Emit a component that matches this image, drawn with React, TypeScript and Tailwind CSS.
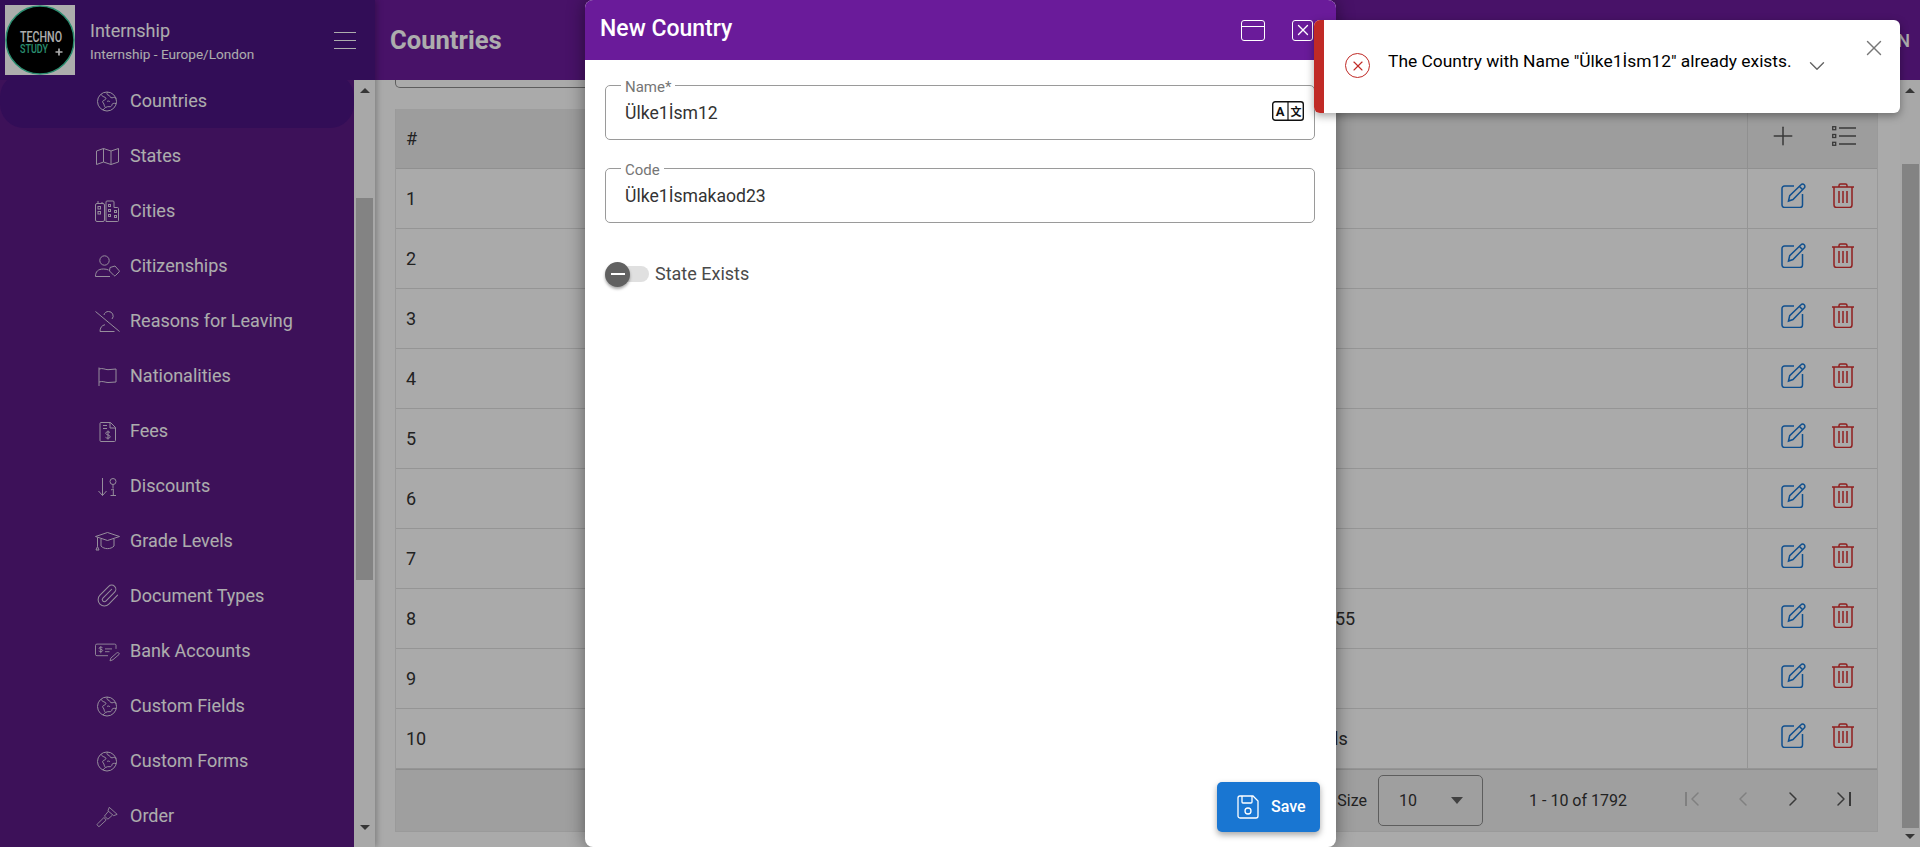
import { ChevronDown, ChevronLeft, ChevronRight, Plus, X, Paperclip } from "lucide-react";

const iconClass = "h-[25px] w-[25px] shrink-0 translate-y-px fill-none stroke-white stroke-1 opacity-80";

function Globe() {
    return (
        <svg viewBox="0 0 25 25" className={iconClass}>
            <circle cx="12" cy="12.500" r="9.500" />
            <path d="M6 5.300c1 2 2.500 2.400 4 3 1.600.7 1 2.200-.5 2.700-1.800.6-2.500 1.700-1.200 3 1.300 1.400.4 3 2.200 4.300" />
            <path d="M12.500 3.200c-1.300 1.500-.2 3 1.500 3.100 1 2 2.700 3.200 4.200 2.200 1-.6 2 .8 3.100.8" />
            <path d="M8 21c1.200-1.900 4-3.800 6-3.300 2 .4 3-1 3-2.100 0-1 1.700-1.700 4.300-1" />
            <path d="M12 12.500c1-.8 2.500-.5 3 .5" />
        </svg>
    );
}

function MapIcon() {
    return (
        <svg viewBox="0 0 25 25" className={iconClass}>
            <path d="M1.500 7 8.500 4.500l7.500 2.500 7.500-2.500V18L16 20.500 8.500 18l-7 2.500Z" />
            <path d="M8.500 4.500V18M16 7v13.500" />
        </svg>
    );
}

function CitiesIcon() {
    return (
        <svg viewBox="0 0 25 25" className={iconClass}>
            <g transform="translate(0 .5)">
                <rect x="0.500" y="4" width="9" height="18" rx="1.500" />
                <path d="M3 4V1.500M7 4V2.500" />
                <rect x="3" y="7" width="2.500" height="2.500" />
                <rect x="3" y="12" width="2.500" height="2.500" />
                <path d="M11 22V2.500a1 1 0 0 1 1-1h6a1 1 0 0 1 1 1V8h3.500a1 1 0 0 1 1 1v12a1 1 0 0 1-1 1Z" />
                <rect x="13.500" y="5" width="2" height="2" />
                <rect x="13.500" y="10" width="2" height="2" />
                <rect x="13.500" y="15" width="2" height="2" />
                <rect x="19.500" y="11" width="2" height="2" />
                <rect x="19.500" y="16" width="2" height="2" />
            </g>
        </svg>
    );
}

function CitizenIcon() {
    return (
        <svg viewBox="0 0 25 25" className={iconClass}>
            <circle cx="9.500" cy="6.500" r="4.700" />
            <path d="M0.500 22.500c0-5 2.500-7.500 8-7.500 2 0 3.500.3 5 1M0.500 22.500H15" />
            <path d="m15 13.500 5-1.500 4 4.500a1 1 0 0 1 0 1.500l-3.500 3.500a1 1 0 0 1-1.500 0l-4.500-4.500Z" />
        </svg>
    );
}

function LeavingIcon() {
    return (
        <svg viewBox="0 0 25 25" className={iconClass}>
            <path d="m0.500 2.500 24 20" />
            <path d="M9 6c.5-2.500 2.500-3.500 4.500-3.500a4.500 4.500 0 0 1 3.500 7.500" />
            <path d="M5 22.500c0-3.500 1.500-6 5-6.800M5 22.500h14.500" />
        </svg>
    );
}

function FlagIcon() {
    return (
        <svg viewBox="0 0 25 25" className={iconClass}>
            <path d="M4 3.500V22" />
            <path d="M4 5c4-1.300 6 .7 9 .7s5-.7 8-.7v13c-3 0-5 .5-8 .5s-5-1.800-9-.5" />
        </svg>
    );
}

function FeesIcon() {
    return (
        <svg viewBox="0 0 25 25" className={iconClass}>
            <path d="M6 3.500h9.500l5 5V21.500a1 1 0 0 1-1 1H6a1 1 0 0 1-1-1V4.500a1 1 0 0 1 1-1Z" />
            <path d="M15 3.500v5.500h5.500M8 6.500h4M8 9.500h4" />
            <path d="M15 13.500c-.8-1-4.200-1.200-4.300.8-.1 2 4.500 1.100 4.500 3.500 0 1.800-3.700 1.800-4.700.5M13 11.500v9" />
        </svg>
    );
}

function DiscountIcon() {
    return (
        <svg viewBox="0 0 25 25" className={iconClass}>
            <path d="M7.500 4v17.500M3.500 17l4 4.500 4-4.500" />
            <circle cx="18" cy="7.500" r="3" />
            <path d="M18 10.500v3.500M16 16l2.300-1.200v6.700M15.500 21.500h5.500" />
        </svg>
    );
}

function GradeIcon() {
    return (
        <svg viewBox="0 0 25 25" className={iconClass}>
            <path d="M12.500 3.500 24.500 7.500 12.500 11.500 0.500 7.500Z" />
            <path d="M6 10v7c3 3.500 10 3.500 13 0v-7" />
            <path d="M2.500 8.500v9M1 21l1.500-3.500L4 21Z" />
        </svg>
    );
}

function BankIcon() {
    return (
        <svg viewBox="0 0 25 25" className={iconClass}>
            <g transform="translate(0 3.500) scale(1 .8)">
                <path d="M21 8V3.500a1.500 1.500 0 0 0-1.500-1.500H2a1.500 1.500 0 0 0-1.500 1.500V15A1.500 1.500 0 0 0 2 16.500h11" />
                <path d="M7.500 6.500c-.8-.8-3.500-.8-3.500.7s3.700 1 3.700 2.800c0 1.600-3 1.600-4 .6M5.800 4.500v9M10 8h7M10 11.500h4.500" />
                <path d="m15 23 .8-3.500 6-6.500a1.500 1.500 0 0 1 2.200 2l-6 6.500Z" />
            </g>
        </svg>
    );
}

function GavelIcon() {
    return (
        <svg viewBox="0 0 25 25" className={iconClass}>
            <g transform="translate(1.500 2) scale(.88)">
                <path d="m14.500 1.500 9 8-4 1.500-6.500-5.500Z" />
                <path d="m13.500 6-4.500 5.500 4 3.500 5-4.500" />
                <path d="M8.500 13 1.500 20a1.500 1.500 0 0 0 0 2.500 1.500 1.500 0 0 0 2.500 0l7-6.500Z" />
            </g>
        </svg>
    );
}

function Clip() {
    return <Paperclip strokeWidth={1} className="h-[25px] w-[25px] shrink-0 text-white opacity-80" />;
}

const menu = [
    { label: "Countries", icon: <Globe /> },
    { label: "States", icon: <MapIcon /> },
    { label: "Cities", icon: <CitiesIcon /> },
    { label: "Citizenships", icon: <CitizenIcon /> },
    { label: "Reasons for Leaving", icon: <LeavingIcon /> },
    { label: "Nationalities", icon: <FlagIcon /> },
    { label: "Fees", icon: <FeesIcon /> },
    { label: "Discounts", icon: <DiscountIcon /> },
    { label: "Grade Levels", icon: <GradeIcon /> },
    { label: "Document Types", icon: <Clip /> },
    { label: "Bank Accounts", icon: <BankIcon /> },
    { label: "Custom Fields", icon: <Globe /> },
    { label: "Custom Forms", icon: <Globe /> },
    { label: "Order", icon: <GavelIcon /> },
];

const rows = [
    { n: 1, name: "", offset: "" },
    { n: 2, name: "", offset: "" },
    { n: 3, name: "", offset: "" },
    { n: 4, name: "", offset: "" },
    { n: 5, name: "", offset: "" },
    { n: 6, name: "", offset: "" },
    { n: 7, name: "", offset: "" },
    { n: 8, name: "55", offset: "pl-[34px]" },
    { n: 9, name: "", offset: "" },
    { n: 10, name: "ls", offset: "pl-[33px]" },
];

function Logo() {
    return (
        <svg viewBox="0 0 70 70" className="h-[70px] w-[70px] shrink-0 bg-white">
            <circle cx="35" cy="35" r="34" fill="#000" stroke="#3fd0a5" strokeWidth="1.500" />
            <text x="15" y="37" textLength="42" lengthAdjust="spacingAndGlyphs" fill="#fff" fontSize="15" fontWeight="500" fontFamily="Roboto, sans-serif">TECHNO</text>
            <text x="15" y="48" textLength="28" lengthAdjust="spacingAndGlyphs" fill="#3fd0a5" fontSize="13.500" fontWeight="500" fontFamily="Roboto, sans-serif">STUDY</text>
            <path d="M50.500 47h7M54 43.500v7" stroke="#fff" strokeWidth="1.700" />
        </svg>
    );
}

function ScrollBar({ width, thumbTop, thumbClass }: { width: string; thumbTop: string; thumbClass: string }) {
    return (
        <div className={`flex h-full shrink-0 flex-col items-center bg-[#f8f8f8] ${width}`}>
            <div className="mt-[8px] h-0 w-0 border-x-[5px] border-b-[5px] border-x-transparent border-b-[#505050]" />
            <div className={`w-[17px] flex-1 bg-[#c1c1c1] ${thumbTop} ${thumbClass}`} />
            <div className="mb-[8px] h-0 w-0 border-x-[5px] border-t-[5px] border-x-transparent border-t-[#505050]" />
        </div>
    );
}

function EditIcon() {
    return (
        <svg viewBox="0 0 25 25" className="h-[25px] w-[25px] fill-none stroke-[#1976d2] stroke-[1.500]">
            <path d="M13 3H3.500A2.500 2.500 0 0 0 1 5.500V22a2.500 2.500 0 0 0 2.500 2.500H19a2.500 2.500 0 0 0 2.500-2.500V11" />
            <path d="m7.500 18 1.200-5.300L20 1.800a2.200 2.200 0 0 1 3.200 0 2.200 2.200 0 0 1 0 3.200L12 16.500Z" />
            <path d="m18.500 3.500 3 3" />
        </svg>
    );
}

function TrashIcon() {
    return (
        <svg viewBox="0 0 22 25" className="h-[25px] w-[22px] fill-none stroke-[#d32f2f] stroke-[1.500]">
            <path d="M0 4h22M7 4V2.500A1.500 1.500 0 0 1 8.500 1h5A1.500 1.500 0 0 1 15 2.500V4" />
            <path d="M2 4v18a2.500 2.500 0 0 0 2.500 2.500h13A2.500 2.500 0 0 0 20 22V4" />
            <path d="M7 8v12M11 8v12M15 8v12" />
        </svg>
    );
}

function Field({ label, value, children }: { label: string; value: string; children?: React.ReactNode }) {
    return (
        <fieldset className="relative h-[62px] rounded-[5px] border border-[#9a9a9a] pl-[15px]">
            <legend className="h-[14px] px-[4px] text-[15px] leading-[18px] text-[#757575]">{label}</legend>
            <div className="flex h-[42px] items-center pl-[4px] text-[17.600px] text-[#333]">{value}</div>
            {children}
        </fieldset>
    );
}

export default function App() {
    return (
        <div className="relative flex h-[847px] w-[1920px] overflow-hidden bg-white font-['Roboto',sans-serif]">
            {/* sidebar */}
            <aside className="z-10 flex h-full w-[375px] shrink-0 flex-col shadow-[2px_0_6px_rgba(0,0,0,0.25)]">
                <div className="flex h-20 shrink-0 items-center bg-[#4a1480] pl-[5px] text-white">
                    <Logo />
                    <div className="ml-[15px] flex-1">
                        <div className="text-[18px] leading-6">Internship</div>
                        <div className="mt-[3px] text-[13.600px] leading-4">Internship - Europe/London</div>
                    </div>
                    <div className="mr-[19px] flex w-[22px] flex-col gap-[7px]">
                        <div className="h-px bg-white" />
                        <div className="h-px bg-white" />
                        <div className="h-px bg-white" />
                    </div>
                </div>
                <div className="flex min-h-0 flex-1">
                    <nav className="w-[354px] overflow-hidden bg-[#5a1a84]">
                        <div className="mt-[-7px]">
                            {menu.map((item, i) => (
                                <div
                                    key={item.label}
                                    className={`flex h-[55px] items-center pl-[95px] text-[18px] text-white ${i === 0 ? "rounded-[24px] bg-[#4a1480]" : ""}`}
                                >
                                    {item.icon}
                                    <span className="ml-[10px]">{item.label}</span>
                                </div>
                            ))}
                        </div>
                    </nav>
                    <ScrollBar width="w-[21px]" thumbTop="mt-[105px]" thumbClass="mb-[245px] max-h-[382px]" />
                </div>
            </aside>

            {/* page */}
            <div className="flex min-w-0 flex-1 flex-col">
                <header className="flex h-20 shrink-0 items-center bg-[#6a1b9a] pl-[15px] pr-[10px]">
                    <h1 className="text-[25.600px] font-bold text-white">Countries</h1>
                    <div className="ml-auto h-[30px] w-[30px] rounded-full bg-[#1976d2]" />
                    <div className="ml-[88px] h-[30px] w-[30px] rounded-full bg-[#424242]" />
                    <span className="ml-[120px] text-[18px] font-medium text-white">ADMIN</span>
                </header>
                <div className="flex min-h-0 flex-1">
                    <main className="min-w-0 flex-1 bg-[#fbfbfb] pl-5 pr-[22px]">
                        <div className="h-2 rounded-b-[5px] border border-t-0 border-[#8a8a8a]" />
                        <div className="mt-[21px] border-x border-b border-[#e3e3e3] text-[18px] text-[#333]">
                            <div className="flex h-[60px] items-center border-b border-[#d5d5d5] bg-[#e8e8e8]">
                                <div className="flex-1 pl-[10px]">#</div>
                                <div className="flex h-full w-[130px] items-center border-l border-[#d5d5d5] pb-[6px] pl-[10px]">
                                    <div className="flex w-[50px] justify-center">
                                        <Plus strokeWidth={1.2} className="h-[30px] w-[30px] text-[#555]" />
                                    </div>
                                    <div className="ml-[11px] flex w-[50px] justify-center">
                                        <svg viewBox="0 0 24 20" className="h-5 w-6 fill-none stroke-[#555] stroke-[1.300]">
                                            <rect x="0.700" y="0.700" width="3" height="3" />
                                            <rect x="0.700" y="8.500" width="3" height="3" />
                                            <rect x="0.700" y="16.300" width="3" height="3" />
                                            <path d="M7 2h17M7 10h17M7 18h17" />
                                        </svg>
                                    </div>
                                </div>
                            </div>
                            {rows.map((row) => (
                                <div key={row.n} className="flex h-[60px] items-center border-b border-[#dcdcdc]">
                                    <div className="w-[905px] shrink-0 pl-[10px]">{row.n}</div>
                                    <div className={`flex-1 ${row.offset}`}>{row.name}</div>
                                    <div className="flex h-full w-[130px] shrink-0 items-center border-l border-[#dcdcdc] pb-[6px] pl-5">
                                        <div className="flex w-[50px] justify-center"><EditIcon /></div>
                                        <div className="flex w-[50px] justify-center"><TrashIcon /></div>
                                    </div>
                                </div>
                            ))}
                            <div className="flex h-[62px] items-center justify-end border-t border-[#d0d0d0] bg-[#ebebeb] pr-[10px] text-[16px]">
                                <span>Page Size</span>
                                <div className="ml-[11px] flex h-[51px] w-[105px] items-center rounded-[5px] border border-[#8a8a8a] pl-[20px]">
                                    <span className="flex-1">10</span>
                                    <div className="mr-[19px] h-0 w-0 border-x-[6px] border-t-[7px] border-x-transparent border-t-[#616161]" />
                                </div>
                                <span className="ml-[46px]">1 - 10 of 1792</span>
                                <div className="ml-[40px] mb-[4px] flex">
                                    <div className="flex w-[50px] items-center justify-center pl-[7px] text-[#bdbdbd]">
                                        <div className="h-[14px] w-[2px] bg-current" />
                                        <ChevronLeft strokeWidth={1.500} className="ml-[-4px] h-[24px] w-[24px]" />
                                    </div>
                                    <div className="flex w-[50px] justify-center pl-[2px] text-[#bdbdbd]">
                                        <ChevronLeft strokeWidth={1.500} className="h-[24px] w-[24px]" />
                                    </div>
                                    <div className="flex w-[50px] justify-center pl-[2px] text-[#555]">
                                        <ChevronRight strokeWidth={1.500} className="h-[24px] w-[24px]" />
                                    </div>
                                    <div className="flex w-[50px] items-center justify-center pr-[5px] text-[#555]">
                                        <ChevronRight strokeWidth={1.500} className="mr-[-4px] h-[24px] w-[24px]" />
                                        <div className="h-[14px] w-[2px] bg-current" />
                                    </div>
                                </div>
                            </div>
                        </div>
                    </main>
                    <ScrollBar width="w-5" thumbTop="mt-[71px]" thumbClass="mb-[6px]" />
                </div>
            </div>

            {/* backdrop */}
            <div className="absolute inset-0 z-20 bg-black/32" />

            {/* dialog */}
            <div className="absolute left-[585px] top-0 z-30 flex h-full w-[751px] flex-col rounded-[8px] bg-white shadow-[0_0_18px_rgba(0,0,0,0.45)]">
                <div className="flex h-[60px] shrink-0 items-center rounded-t-[8px] bg-[#6a1b9a] pl-[15px] text-white">
                    <h2 className="flex-1 pb-[2px] text-[23px] font-medium">New Country</h2>
                    <div className="flex h-[21px] w-[24px] flex-col rounded-[3px] border border-white">
                        <div className="h-[6px] border-b border-white" />
                    </div>
                    <div className="ml-[27px] mr-[23px] flex h-[21px] w-[21px] items-center justify-center rounded-[3px] border border-white">
                        <X strokeWidth={1.800} className="h-[18px] w-[18px] shrink-0" />
                    </div>
                </div>
                <div className="flex flex-1 flex-col pl-5 pr-[21px] pt-[18px]">
                    <Field label="Name*" value="Ülke1İsm12">
                        <svg viewBox="0 0 32 20" className="absolute right-[10px] top-[9px] h-[20px] w-[32px]">
                            <rect x="0.700" y="0.700" width="30.600" height="18.600" rx="2.500" fill="#fff" stroke="#111" strokeWidth="1.400" />
                            <path d="M16 1v18" stroke="#111" strokeWidth="1.200" />
                            <text x="8" y="15" textAnchor="middle" fontSize="13" fontWeight="700" fill="#111" fontFamily="Roboto, sans-serif">A</text>
                            <text x="24" y="14.500" textAnchor="middle" fontSize="11" fontWeight="700" fill="#111" fontFamily="'Noto Sans CJK SC', sans-serif">文</text>
                        </svg>
                    </Field>
                    <div className="mt-[21px]">
                        <Field label="Code" value="Ülke1İsmakaod23" />
                    </div>
                    <div className="mt-[38px] flex h-[25px] items-center">
                        <div className="relative h-[16px] w-[44px] shrink-0">
                            <div className="ml-[10px] h-full rounded-full bg-[#e0e0e0]" />
                            <div className="absolute left-0 top-[-4px] flex h-[25px] w-[25px] items-center justify-center rounded-full bg-[#616161] shadow-[0_2px_3px_rgba(0,0,0,0.35)]">
                                <div className="h-[2px] w-[14px] bg-white" />
                            </div>
                        </div>
                        <span className="ml-[6px] text-[18px] text-[#4a4a4a]">State Exists</span>
                    </div>
                    <div className="mt-auto mb-[15px] flex justify-end">
                        <button className="mr-[-5px] flex h-[50px] w-[103px] items-center rounded-[5px] bg-[#1976d2] pl-[20px] text-[16px] font-medium text-white shadow-[0_3px_6px_rgba(0,0,0,0.35)]">
                            <svg viewBox="0 0 22 24" className="h-6 w-[22px] shrink-0 fill-none stroke-white stroke-[1.300]">
                                <path d="M3 1h13l5 5v15a2 2 0 0 1-2 2H3a2 2 0 0 1-2-2V3a2 2 0 0 1 2-2Z" />
                                <path d="M5 1v6a1 1 0 0 0 1 1h8a1 1 0 0 0 1-1V1" />
                                <circle cx="11" cy="16" r="3" />
                            </svg>
                            <span className="ml-[12px]">Save</span>
                        </button>
                    </div>
                </div>
            </div>

            {/* toast */}
            <div className="absolute left-[1314px] top-5 z-40 flex h-[93px] w-[586px] overflow-hidden rounded-[6px] bg-white shadow-[0_3px_8px_rgba(0,0,0,0.35)]">
                <div className="w-[10px] shrink-0 bg-[#c02a26]" />
                <div className="ml-[21px] mt-[33px] flex h-[25px] w-[25px] shrink-0 items-center justify-center rounded-full border-[1.500px] border-[#c02a26]">
                    <X strokeWidth={1.700} className="h-[16px] w-[16px] shrink-0 text-[#c02a26]" />
                </div>
                <span className="ml-[18px] mt-[31px] text-[17.400px] leading-5 text-black">The Country with Name "Ülke1İsm12" already exists.</span>
                <ChevronDown strokeWidth={1.300} className="ml-[12px] mt-[33px] h-[26px] w-[26px] text-[#666]" />
                <X strokeWidth={1.300} className="absolute left-[547px] top-[15px] h-[26px] w-[26px] text-[#777]" />
            </div>
        </div>
    );
}
